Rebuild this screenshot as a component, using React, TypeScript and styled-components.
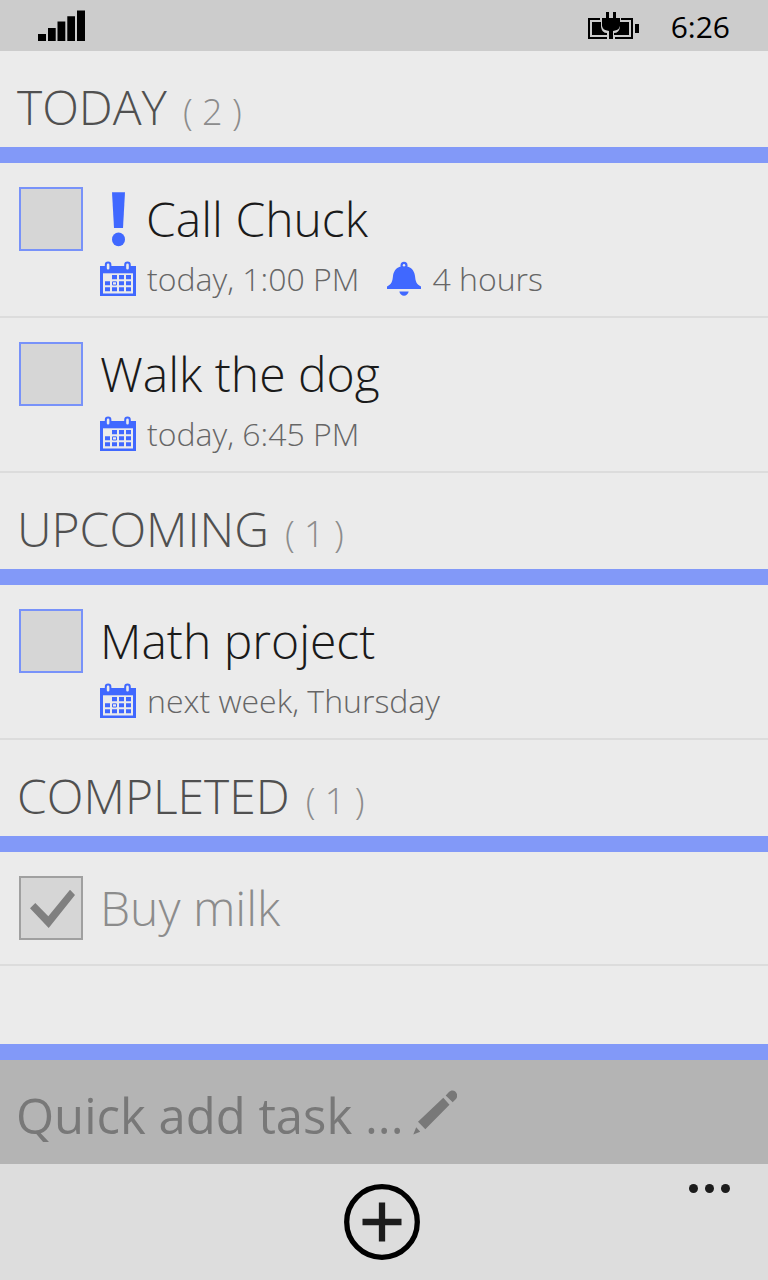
import React, { useState } from "react";
import styled, { createGlobalStyle } from "styled-components";

const accent = "#4068ff";

const GlobalStyle = createGlobalStyle`
  *, *::before, *::after { box-sizing: border-box; }
  body {
    margin: 0;
    background: #ebebeb;
    font-family: "Open Sans", "Noto Sans", sans-serif;
    font-weight: 300;
  }
`;

const Screen = styled.div`
  display: flex;
  flex-direction: column;
  min-height: 100vh;
`;

const StatusBar = styled.header`
  display: flex;
  align-items: center;
  height: 51px;
  padding: 0 38px;
  background: #cccccc;
  color: #000;
`;

const StatusRight = styled.div`
  display: flex;
  align-items: center;
  gap: 32px;
  margin-left: auto;
`;

const Clock = styled.time`
  font-size: 30px;
  line-height: 48px;
  font-weight: 400;
  padding-top: 3px;
`;

const List = styled.main`
  flex: 1;
`;

const SectionTitle = styled.h2`
  display: flex;
  align-items: baseline;
  gap: 16px;
  margin: 0;
  padding: 18px 17px 2px;
  border-bottom: 16px solid #8299f8;
  color: #505050;
  font-size: 48px;
  line-height: 76px;
  font-weight: 300;
`;

const Count = styled.span`
  color: #8c8c8c;
  font-size: 36px;
  line-height: 52px;
`;

const Tasks = styled.ul`
  list-style: none;
  margin: 0;
  padding: 0;
`;

const TaskRow = styled.li<{ $compact: boolean }>`
  display: flex;
  align-items: flex-start;
  gap: 17px;
  padding: 24px 19px ${(p) => (p.$compact ? 24 : 19)}px;
  border-bottom: 2px solid #dcdcdc;
`;

const TickBox = styled.span`
  display: grid;
  flex: none;
  width: 64px;
  height: 64px;
  > * {
    grid-area: 1 / 1;
  }
`;

const Tick = styled.input`
  appearance: none;
  width: 64px;
  height: 64px;
  margin: 0;
  border: 2px solid #7892f9;
  background: #d6d6d6;
  &:checked {
    border-color: #a0a0a0;
  }
`;

const TickMark = styled.svg`
  pointer-events: none;
`;

const TaskBody = styled.div`
  flex: 1;
  min-width: 0;
`;

const TaskTitle = styled.label<{ $done: boolean }>`
  display: flex;
  color: ${(p) => (p.$done ? "#8c8c8c" : "#1a1a1a")};
  font-size: 48px;
  line-height: 64px;
`;

const Details = styled.div`
  display: flex;
  gap: 28px;
  margin-top: 10px;
  color: #666;
  font-size: 32px;
  line-height: 36px;
`;

const Detail = styled.span`
  display: flex;
  gap: 11px;
  white-space: nowrap;
`;

const QuickAdd = styled.form`
  display: flex;
  align-items: center;
  gap: 9px;
  padding: 0 16px;
  border-top: 16px solid #8299f8;
  background: #b4b4b4;
  color: #787878;
`;

const QuickInput = styled.input`
  field-sizing: content;
  min-width: 0;
  height: 104px;
  padding: 6px 0 0;
  border: 0;
  outline: 0;
  background: transparent;
  color: #1a1a1a;
  font: inherit;
  font-size: 49px;
  font-weight: 400;
  &::placeholder {
    color: #787878;
    opacity: 1;
  }
`;

const AppBar = styled.footer`
  display: grid;
  grid-template-columns: 1fr auto 1fr;
  align-items: start;
  padding: 20px 38px 20px 34px;
  background: #dddddd;
`;

const BarButton = styled.button`
  display: block;
  grid-column: 2;
  padding: 0;
  border: 0;
  background: none;
  cursor: pointer;
  svg {
    display: block;
  }
`;

const MoreButton = styled(BarButton)`
  grid-column: 3;
  justify-self: end;
`;

const SignalIcon = () => (
  <svg width="47" height="31" viewBox="0 0 47 31" aria-hidden="true">
    <path d="M0 24h8v7H0zM10 18h7.7v13H10zM19.5 11.5h7.8V31h-7.8zM29.3 6.2H37V31h-7.7zM39 .5h8V31h-8z" />
  </svg>
);

const BatteryIcon = () => (
  <svg width="51" height="28" viewBox="0 0 51 28" aria-hidden="true">
    <path d="M12 7H1v19h18M33 7h11v19H27" fill="none" stroke="#000" strokeWidth="2" />
    <path d="M47 12h4v9h-4zM4 10h9v5q1 6 6 6v2H4zM41 10h-9v5q-1 6-6 6v2h15z" />
    <path d="M18 0h3v6h4V0h3v6h4v8q-1 4-5 4.500L25 19v8h-4v-8l-2-.5q-4-.5-5-4.500V6h4z" />
  </svg>
);

const CalendarIcon = () => (
  <svg width="36" height="36" viewBox="0 0 36 36" aria-hidden="true">
    <path d="M0 5h36v30H0z" fill={accent} />
    <path d="M3 12.300h30v20.200H3z" fill="#ebebeb" />
    <rect x="5.800" y="1.600" width="4.600" height="8" rx="2.300" fill="#ebebeb" stroke={accent} strokeWidth="2" />
    <rect x="25.200" y="1.600" width="4.600" height="8" rx="2.300" fill="#ebebeb" stroke={accent} strokeWidth="2" />
    <path
      d="M12 14h5v4.200h-5zM19 14h5v4.200h-5zM26 14h5v4.200h-5zM5 20.300h5v4H5zM19 20.300h5v4h-5zM26 20.300h5v4h-5zM5 26.300h5v4H5zM12 26.300h5v4h-5zM19 26.300h5v4h-5zM26 26.300h5v4h-5z"
      fill={accent}
    />
    <path d="M12.500 20.800h4v3.200h-4z" fill="none" stroke={accent} />
  </svg>
);

const BellIcon = () => (
  <svg width="34" height="36" viewBox="0 0 34 36" aria-hidden="true">
    <circle cx="17" cy="4.200" r="3.500" fill={accent} />
    <path d="M13.500 5.500C8.500 7 6.500 11 6 15c-.6 5-1 8-6 10.500V28h34v-2.500c-5-2.500-5.400-5.500-6-10.500-.5-4-2.500-8-7.500-9.500z" fill={accent} />
    <path d="M12.300 30.500h9.400c-.6 2.700-2.400 4.200-4.700 4.200s-4.100-1.500-4.700-4.200z" fill={accent} />
    <circle cx="17" cy="4.200" r="1.200" fill="#ebebeb" />
  </svg>
);

const PriorityIcon = () => (
  <svg width="46" height="64" viewBox="0 0 46 64" role="img" aria-label="High priority">
    <path d="M12 5.200h13L23 41h-9z" fill={accent} />
    <ellipse cx="18.500" cy="52.400" rx="6.500" ry="6.800" fill={accent} />
  </svg>
);

const PencilIcon = () => (
  <svg width="44" height="45" viewBox="0 0 44 45" aria-hidden="true" fill="#787878">
    <path d="M5 31.700 30.300 7.800l6.200 7L12.300 39.200zM32.700 5.500l3-3.200c5-5 11.500 2 7 7l-3 3zM3.200 37.300l4 4.500L.3 44.500z" />
  </svg>
);

type Task = {
  id: string;
  title: string;
  priority?: boolean;
  due?: string;
  reminder?: string;
  done?: boolean;
};

const sections: { name: string; tasks: Task[] }[] = [
  {
    name: "TODAY",
    tasks: [
      { id: "call", title: "Call Chuck", priority: true, due: "today, 1:00 PM", reminder: "4 hours" },
      { id: "walk", title: "Walk the dog", due: "today, 6:45 PM" },
    ],
  },
  { name: "UPCOMING", tasks: [{ id: "math", title: "Math project", due: "next week, Thursday" }] },
  { name: "COMPLETED", tasks: [{ id: "milk", title: "Buy milk", done: true }] },
];

function TaskItem({ task }: { task: Task }) {
  const [done, setDone] = useState(!!task.done);
  return (
    <TaskRow $compact={!task.due}>
      <TickBox>
        <Tick type="checkbox" id={task.id} checked={done} onChange={(e) => setDone(e.target.checked)} />
        {done && (
          <TickMark width="64" height="64" viewBox="0 0 64 64" aria-hidden="true">
            <path d="M11 32.300 16.300 27l13 13.300L51 13.700l5 5.300-26.300 33z" fill="#808080" />
          </TickMark>
        )}
      </TickBox>
      <TaskBody>
        <TaskTitle htmlFor={task.id} $done={done}>
          {task.priority && <PriorityIcon />}
          {task.title}
        </TaskTitle>
        {task.due && (
          <Details>
            <Detail>
              <CalendarIcon />
              {task.due}
            </Detail>
            {task.reminder && (
              <Detail>
                <BellIcon />
                {task.reminder}
              </Detail>
            )}
          </Details>
        )}
      </TaskBody>
    </TaskRow>
  );
}

export default function App() {
  return (
    <Screen>
      <GlobalStyle />
      <StatusBar>
        <SignalIcon />
        <StatusRight>
          <BatteryIcon />
          <Clock>6:26</Clock>
        </StatusRight>
      </StatusBar>
      <List>
        {sections.map((section) => (
          <section key={section.name}>
            <SectionTitle>
              {section.name}
              <Count>( {section.tasks.length} )</Count>
            </SectionTitle>
            <Tasks>
              {section.tasks.map((task) => (
                <TaskItem key={task.id} task={task} />
              ))}
            </Tasks>
          </section>
        ))}
      </List>
      <QuickAdd onSubmit={(e) => e.preventDefault()}>
        <QuickInput type="text" placeholder="Quick add task ..." aria-label="Quick add task" />
        <PencilIcon />
      </QuickAdd>
      <AppBar>
        <BarButton type="button" aria-label="Add task">
          <svg width="76" height="76" viewBox="0 0 76 76" aria-hidden="true" fill="none">
            <circle cx="38" cy="38" r="35.300" stroke="#000" strokeWidth="5.300" />
            <path d="M18.500 38h39M38 18.500v39" stroke="#1c1c1c" strokeWidth="6.300" />
          </svg>
        </BarButton>
        <MoreButton type="button" aria-label="More options">
          <svg width="41" height="9" viewBox="0 0 41 9" aria-hidden="true" fill="#1c1c1c">
            <circle cx="4.500" cy="4.500" r="4.500" />
            <circle cx="20.500" cy="4.500" r="4.500" />
            <circle cx="36.500" cy="4.500" r="4.500" />
          </svg>
        </MoreButton>
      </AppBar>
    </Screen>
  );
}
